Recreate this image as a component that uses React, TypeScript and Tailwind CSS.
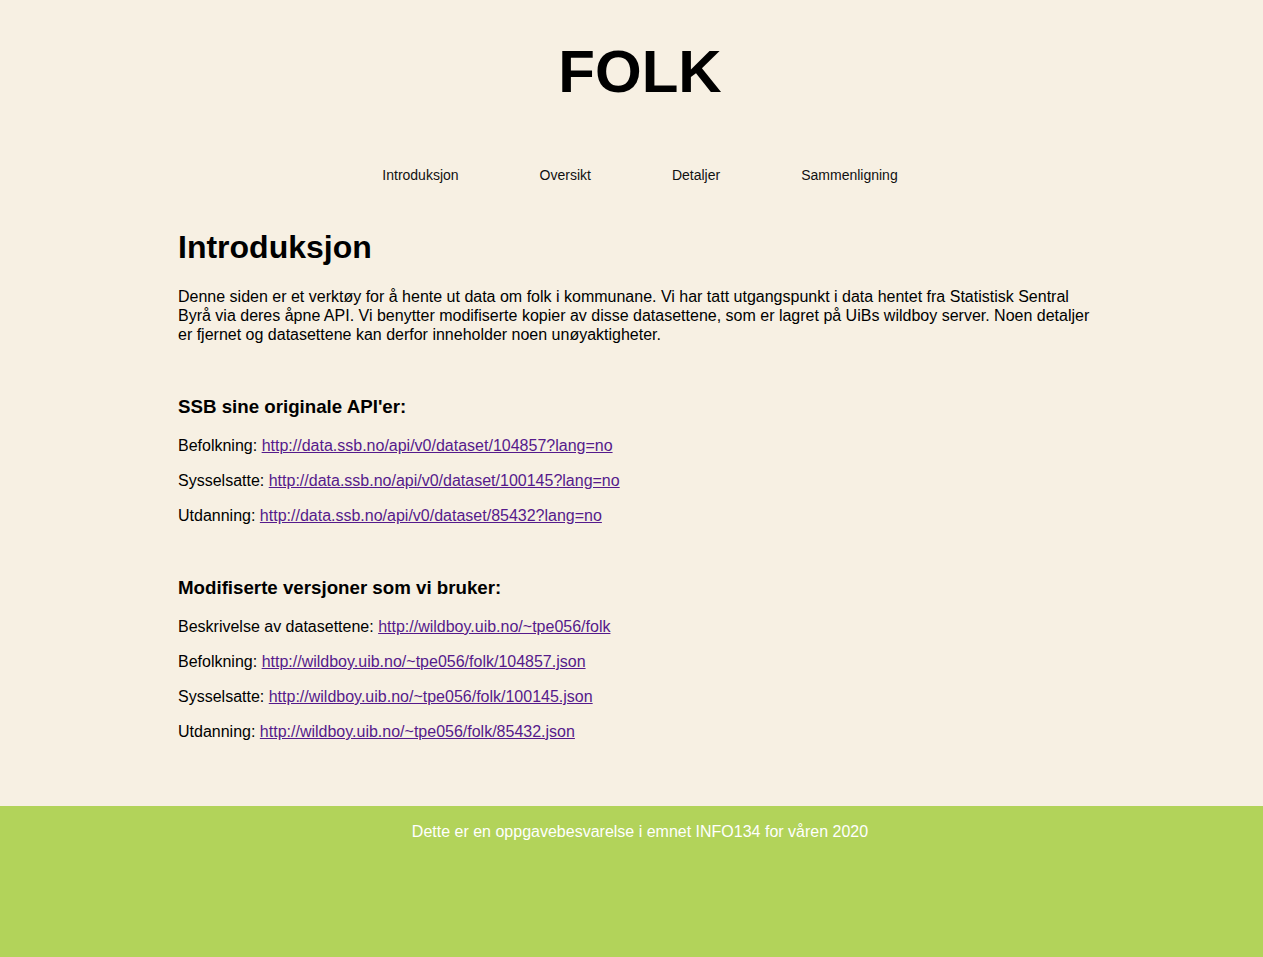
const ssbLinks = [
  { label: "Befolkning", url: "http://data.ssb.no/api/v0/dataset/104857?lang=no" },
  { label: "Sysselsatte", url: "http://data.ssb.no/api/v0/dataset/100145?lang=no" },
  { label: "Utdanning", url: "http://data.ssb.no/api/v0/dataset/85432?lang=no" },
];

const ourLinks = [
  { label: "Beskrivelse av datasettene", url: "http://wildboy.uib.no/~tpe056/folk" },
  { label: "Befolkning", url: "http://wildboy.uib.no/~tpe056/folk/104857.json" },
  { label: "Sysselsatte", url: "http://wildboy.uib.no/~tpe056/folk/100145.json" },
  { label: "Utdanning", url: "http://wildboy.uib.no/~tpe056/folk/85432.json" },
];

const navItems = ["Introduksjon", "Oversikt", "Detaljer", "Sammenligning"];

const LinkList = ({ links }: { links: { label: string; url: string }[] }) => (
  <div className="mt-[17px] flex flex-col gap-4">
    {links.map((l) => (
      <p key={l.url} className="text-base leading-[19px]">
        {l.label}:{" "}
        <a href={l.url} className="text-[#551a8b] underline">
          {l.url}
        </a>
      </p>
    ))}
  </div>
);

export default function App() {
  return (
    <div className="bg-[#f7f0e3] text-black font-['Liberation_Sans',Arial,sans-serif]">
      {/* Header */}
      <header className="pt-[42px] pl-[17px]">
        <h1 className="text-center text-[60px] font-bold leading-[60px]">FOLK</h1>
        <nav className="mt-[63px] flex justify-center gap-[81px] text-sm leading-5 text-[#111]">
          {navItems.map((item) => (
            <a key={item} href="#">
              {item}
            </a>
          ))}
        </nav>
      </header>

      {/* Main content */}
      <main className="ml-[178px] w-[920px] pb-[65px]">
        <h2 className="mt-[42px] text-[32px] font-bold leading-10">Introduksjon</h2>
        <p className="mt-5 text-base leading-[19px]">
          Denne siden er et verktøy for å hente ut data om folk i kommunane. Vi har tatt utgangspunkt i data hentet
          fra Statistisk Sentral Byrå via deres åpne API. Vi benytter modifiserte kopier av disse datasettene, som er
          lagret på UiBs wildboy server. Noen detaljer er fjernet og datasettene kan derfor inneholder noen
          unøyaktigheter.
        </p>

        <h3 className="mt-[51px] text-[18.72px] font-bold leading-6">SSB sine originale API'er:</h3>
        <LinkList links={ssbLinks} />

        <h3 className="mt-[51px] text-[18.72px] font-bold leading-6">Modifiserte versjoner som vi bruker:</h3>
        <LinkList links={ourLinks} />
      </main>

      {/* Footer */}
      <footer className="h-[151px] bg-[#b2d35a] pt-4 pl-[17px] text-center text-base leading-[19px] text-white">
        Dette er en oppgavebesvarelse i emnet INFO134 for våren 2020
      </footer>
    </div>
  );
}
